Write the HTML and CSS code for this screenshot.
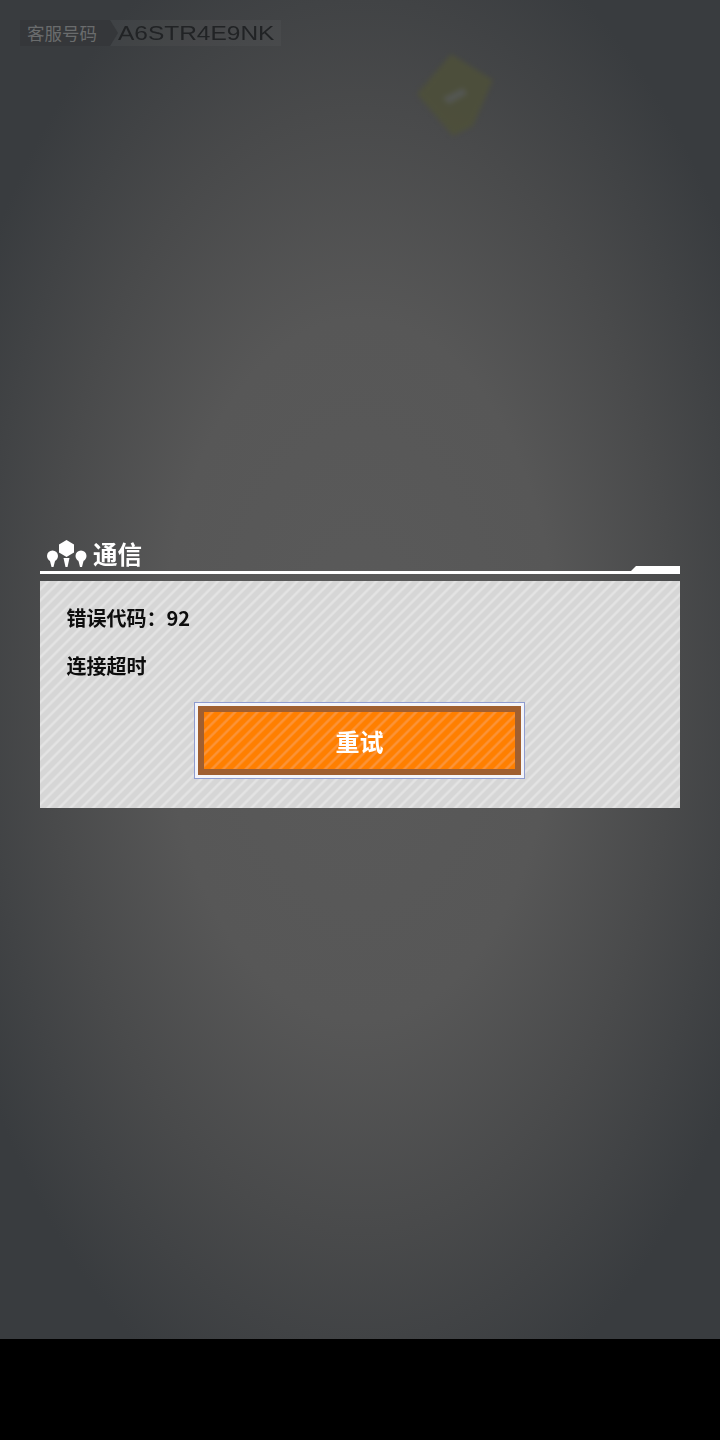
FILE: index.html
```html
<!DOCTYPE html>
<html lang="zh-CN">
<head>
<meta charset="utf-8">
<title>通信</title>
<link rel="stylesheet" href="styles.css">
</head>
<body>
<main class="screen">
  <div class="service">
    <span class="service-label">客服号码</span>
    <span class="service-code">A6STR4E9NK</span>
  </div>
  <svg class="emblem" width="84" height="88" viewBox="0 0 84 88" aria-hidden="true">
    <path d="M38 2 L80 28 L60 74 L40 84 L4 42 Z" fill="#4e5039"/>
    <path d="M30 46 L50 36 L54 42 L36 52 Z" fill="#575a55"/>
  </svg>
  <section class="dialog">
    <header class="title-row">
      <svg class="title-icon" width="42" height="28" viewBox="0 0 42 28" aria-hidden="true">
        <circle cx="6.500" cy="16" r="5.500" fill="#fff"/>
        <path d="M4 21h5l-1.500 6h-2z" fill="#fff"/>
        <path d="M20.500 0 L28 4.500 V12.500 L20.500 17 L13 12.500 V4.500 Z" fill="#fff"/>
        <path d="M17.500 18h6l-2 9h-2z" fill="#fff"/>
        <circle cx="35" cy="16" r="5.500" fill="#fff"/>
        <path d="M32.500 21h5l-1.500 6h-2z" fill="#fff"/>
      </svg>
      <h1 class="title">通信</h1>
    </header>
    <div class="rule"></div>
    <div class="panel">
      <p class="message">错误代码：92</p>
      <p class="message message-second">连接超时</p>
      <div class="actions">
        <button class="retry" type="button"><span class="retry-text">重试</span></button>
      </div>
    </div>
  </section>
</main>
</body>
</html>
```
FILE: styles.css
```css
* { box-sizing: border-box; }
html, body { margin: 0; padding: 0; background: #000; }
body {
  width: 720px;
  height: 1440px;
  overflow: hidden;
  font-family: "Noto Sans CJK SC", "Liberation Sans", sans-serif;
}
.screen {
  position: relative;
  width: 720px;
  height: 1339px;
  padding: 540px 40px 0;
  background: radial-gradient(ellipse 440px 780px at 360px 670px, #5a5a5a 0%, #575757 45%, #494a4b 72%, #393c3f 100%);
}
.service {
  position: absolute;
  left: 20px;
  top: 20px;
  display: flex;
  height: 26px;
  align-items: center;
  background: rgba(255,255,255,.03);
  width: 261px;
  filter: blur(.5px);
}
.service-label {
  width: 98px;
  height: 26px;
  padding-left: 7px;
  font-size: 17.500px;
  line-height: 26px;
  color: #6a6c6d;
  background: #35373a;
  clip-path: polygon(0 0, 90px 0, 98px 13px, 90px 100%, 0 100%);
}
.service-code {
  font-family: "Liberation Sans", sans-serif;
  font-size: 21px;
  color: #212325;
  white-space: nowrap;
  transform: scaleX(1.165);
  transform-origin: left center;
}
.emblem {
  position: absolute;
  left: 413px;
  top: 52px;
  filter: blur(2.500px);
  opacity: .85;
}
.title-row {
  display: flex;
  align-items: center;
  height: 30px;
  padding-left: 6px;
  gap: 5px;
}
.title-icon { display: block; margin-top: -2px; }
.title {
  margin: -2px 0 0;
  font-size: 24.500px;
  line-height: 30px;
  font-weight: 700;
  color: #fff;
  filter: blur(.4px);
}
.rule {
  position: relative;
  height: 3px;
  margin-top: 1px;
  background: #fff;
}
.rule::after {
  content: "";
  position: absolute;
  right: 0;
  bottom: 0;
  width: 52px;
  height: 8px;
  background: #fff;
  clip-path: polygon(8px 0, 100% 0, 100% 100%, 0 100%);
}
.panel {
  height: 227px;
  margin-top: 7px;
  padding: 23px 26.500px 0;
  background: repeating-linear-gradient(135deg, #d6d6d6 0, #d6d6d6 4px, #e3e3e3 5.500px, #e3e3e3 6.500px, #d6d6d6 8px);
}
.message {
  margin: 0;
  height: 28px;
  font-size: 20px;
  line-height: 28px;
  font-weight: 700;
  color: #0d0d0d;
  filter: blur(.4px);
}
.message-second { margin-top: 20px; }
.actions {
  display: flex;
  justify-content: center;
  margin-top: 22px;
  margin-left: -27px;
  margin-right: -26px;
}
.retry {
  width: 331px;
  height: 77px;
  padding: 0;
  border: 1px solid #8f9ccf;
  outline: 0;
  background: #f4f4f8;
  display: block;
  position: relative;
}
.retry::before {
  content: "";
  position: absolute;
  inset: 3px;
  border: 6px solid #a05f30;
  background: repeating-linear-gradient(135deg, #ff7f00 0, #ff7f00 4px, #fb9338 5.500px, #fb9338 6.500px, #ff7f00 8px);
}
.retry-text {
  position: relative;
  display: block;
  font-family: "Noto Sans CJK SC", sans-serif;
  font-size: 24px;
  line-height: 71px;
  font-weight: 700;
  color: #fff;
  filter: blur(.4px);
}
```
